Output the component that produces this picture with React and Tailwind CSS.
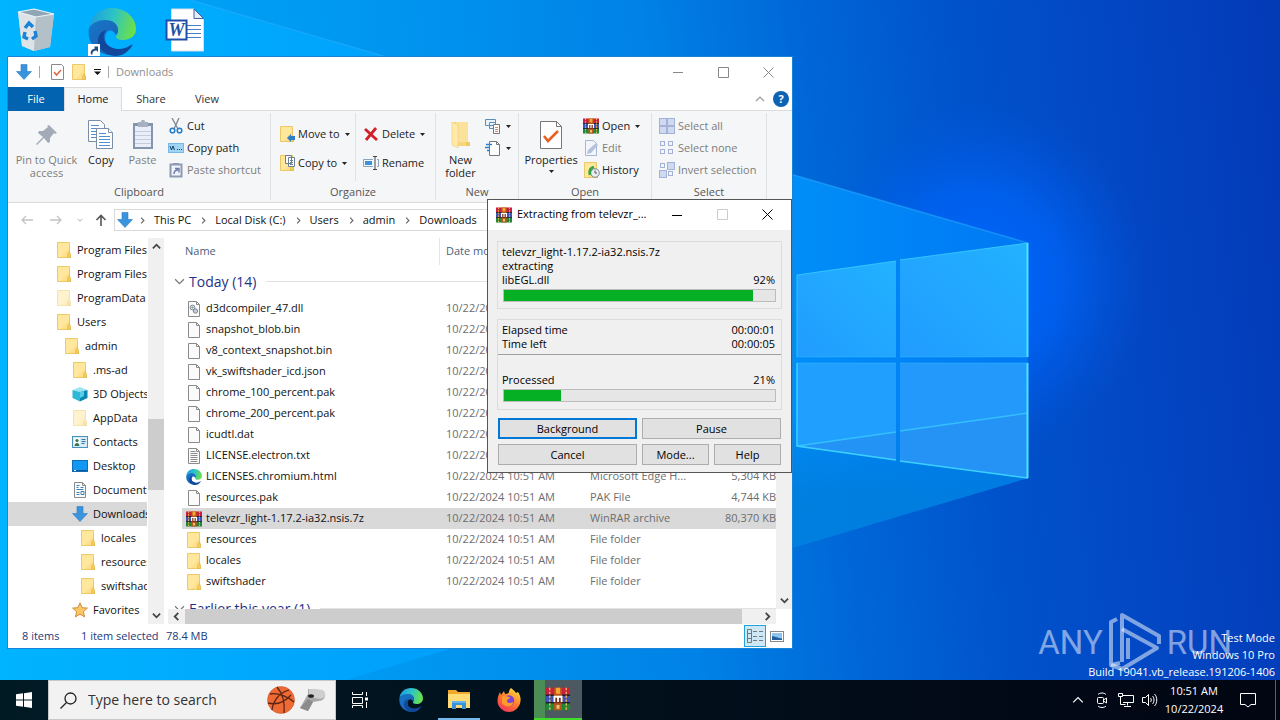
import React, { useState } from 'react';

/* ---------- Small icons ---------- */

const Folder = ({ faded = false, className = 'w-4 h-4' }) => (
    <svg className={className} viewBox="0 0 16 16" opacity={faded ? 0.5 : 1}>
        <path d="M1.5 0.5h12v11l1 1v3h-13z" fill="#ffe08a" stroke="#e8c04f" strokeWidth="0.8" />
        <path d="M2 1h11v4l-8 10H2z" fill="#ffe9a6" opacity="0.7" />
        <path d="M13.5 9.5l-2 2.5v3.5h3v-3z" fill="#f3cd5e" stroke="#dfb347" strokeWidth="0.6" />
    </svg>
);

const BigFolder = () => (
    <svg className="w-5 h-7" viewBox="0 0 20 28">
        <path d="M3 1h14v20l2 2v2H3z" fill="#f6d67c" />
        <path d="M5 1h12v20H5z" fill="#fbe29a" />
        <path d="M1 1l6 3v23l-6-3z" fill="#ffe9ab" stroke="#f0cf72" strokeWidth="0.6" />
        <path d="M15 21h4v4h-4z" fill="#f0c95f" />
    </svg>
);

const DownArrow = ({ className = 'w-4 h-4' }) => (
    <svg className={className} viewBox="0 0 16 16">
        <path d="M5 0.5h6v7h4.5L8 15.5 0.5 7.5H5z" fill="#3a93dd" stroke="#2b7cc4" strokeWidth="0.6" />
    </svg>
);

const PageIcon = ({ kind, className = 'w-4 h-4' }) => (
    <svg className={className} viewBox="0 0 16 16" fill="none">
        <path d="M2.5 0.5h8l3 3v12h-11z" fill="#fbfbfb" stroke="#8a8a8a" />
        <path d="M10.5 0.5v3h3" stroke="#8a8a8a" />
        {kind === 'text' && <path d="M4.5 3.5h5M4.5 5.5h7M4.5 7.5h7M4.5 9.5h7M4.5 11.5h7M4.5 13.5h7" stroke="#8d8d8d" />}
        {kind === 'dll' && (
            <g stroke="#7d8b96">
                <circle cx="6.5" cy="6.5" r="2.4" fill="#dce4ea" />
                <circle cx="9.5" cy="10" r="2.2" fill="#c3cfd8" />
                <circle cx="6.5" cy="6.5" r="0.6" />
            </g>
        )}
        {kind === 'doc' && (
            <g stroke="#3b82b8">
                <path d="M4.5 3.5h3M4.5 5.5h2M8.5 5.5h3M4.5 7.5h7M4.5 10.5h3M9 9.5h3v3H9zM4.5 12.5h3" />
            </g>
        )}
    </svg>
);

const RarIcon = ({ className = 'w-4 h-4' }) => (
    <svg className={className} viewBox="0 0 16 16">
        <rect x="0" y="0.5" width="16" height="5" fill="#c8203f" />
        <rect x="0" y="5.5" width="16" height="5" fill="#3f52b5" />
        <rect x="0" y="10.5" width="16" height="5" fill="#238636" />
        <path d="M0 5.5h16M0 10.5h16" stroke="#20202c" strokeWidth="0.9" />
        <path d="M2.5 0.5v15M13.5 0.5v15" stroke="#e3b04b" strokeWidth="1" strokeDasharray="1.6 1" />
        <rect x="5.4" y="0.5" width="5.2" height="15" fill="#b8561f" />
        <rect x="6.6" y="0.5" width="2.8" height="4" fill="#f7a531" />
        <path d="M5 6.2h6v4.6H5z" fill="#7c2c14" />
        <path d="M5.6 10V6.5h4.8V10M8 6.5V10" stroke="#fff" strokeWidth="1.2" fill="none" />
        <path d="M7 12h2v2.5H7z" fill="#e9c36b" />
    </svg>
);

const EdgeIcon = ({ className = 'w-4 h-4', id = 'e' }) => (
    <svg className={className} viewBox="0 0 48 48">
        <defs>
            <linearGradient id={`${id}a`} x1="0" y1="0.2" x2="1" y2="0.4">
                <stop offset="0" stopColor="#1b9ce0" />
                <stop offset="0.5" stopColor="#2cc3c8" />
                <stop offset="1" stopColor="#6be04a" />
            </linearGradient>
            <linearGradient id={`${id}b`} x1="0" y1="0" x2="0.8" y2="1">
                <stop offset="0" stopColor="#1677c8" />
                <stop offset="1" stopColor="#1b5fb5" />
            </linearGradient>
        </defs>
        <path d="M1 20C2 8 12 0 24 0c14 0 24 10 24 21 0 7-6 11-13 11-5 0-7-2-7-3 0-2 2-3 2-7 0-5-5-9-12-9C9 13 3 16 1 20z" fill={`url(#${id}a)`} />
        <path d="M1 20c3-5 9-8 16-8 8 0 13 4 13 10 0 3-1 4-2 5-2-4-6-6-9-3-5 6 0 19 11 23C15 50-2 39 1 20z" fill={`url(#${id}b)`} />
        <path d="M18 22c-6 9 1 18 12 19 6 0 10-2 13-4 1-1 2 0 1 1-4 6-9 10-17 10-11-1-18-9-17-17 1-5 4-8 8-9z" fill="#12489c" />
    </svg>
);

const ContactsIcon = () => (
    <svg className="w-4 h-4" viewBox="0 0 16 16">
        <rect x="0.5" y="2.5" width="15" height="11" fill="#d8ecf8" stroke="#4a90bd" />
        <rect x="2" y="4" width="6" height="8" fill="#fff" />
        <circle cx="5" cy="6.5" r="1.6" fill="#38764f" />
        <path d="M2.5 12c0-4 5-4 5 0z" fill="#38764f" />
        <path d="M9.5 5.5h4M9.5 7.5h4M9.5 9.5h3" stroke="#2f78aa" />
    </svg>
);

const DesktopIcon = () => (
    <svg className="w-4 h-4" viewBox="0 0 16 16">
        <rect x="0.5" y="2.5" width="15" height="11" fill="#1198f2" stroke="#0d6fb8" />
        <path d="M1 12.5h14" stroke="#0b5796" />
        <path d="M2 12.5h2" stroke="#fff" />
    </svg>
);

const CubeIcon = () => (
    <svg className="w-4 h-4" viewBox="0 0 16 16">
        <path d="M0.5 4L8 1l7.5 3L8 6z" fill="#9ce4f2" />
        <path d="M0.5 4L8 6v9.5L0.5 12z" fill="#2fb7d8" />
        <path d="M15.5 4L8 6v9.5l7.5-3.5z" fill="#0b86b4" />
        <path d="M8 6l4-1v5l-4 2z" fill="#53cdea" />
    </svg>
);

const StarIcon = () => (
    <svg className="w-4 h-4" viewBox="0 0 16 16">
        <path d="M8 0.8l2.1 4.9 5.3.4-4 3.5 1.2 5.3L8 12.1l-4.6 2.8 1.2-5.3-4-3.5 5.3-.4z" fill="#fbc765" stroke="#d08a3c" />
    </svg>
);

const Chevron = ({ dir = 'down', className = 'w-2 h-2', width = 2 }) => {
    const d = { down: 'M1 3l4 4 4-4', up: 'M1 7l4-4 4 4', left: 'M7 1L3 5l4 4', right: 'M3 1l4 4-4 4' }[dir];
    return (
        <svg className={className} viewBox="0 0 10 10" fill="none" stroke="currentColor" strokeWidth={width}>
            <path d={d} />
        </svg>
    );
};

const Caret = () => (
    <svg className="w-[5px] h-[3px] shrink-0" viewBox="0 0 5 3"><path d="M0 0h5L2.5 3z" fill="#222" /></svg>
);

const WindowControls = ({ tone, maxTone }) => (
    <div className="flex items-center">
        <button aria-label="Minimize" className={`w-[46px] h-7 grid place-items-center ${tone}`}>
            <svg className="w-[10px] h-[10px]" viewBox="0 0 10 10" stroke="currentColor"><path d="M0 5.5h10" /></svg>
        </button>
        <button aria-label="Maximize" className={`w-11 h-7 grid place-items-center ${maxTone}`}>
            <svg className="w-[11px] h-[11px]" viewBox="0 0 11 11" stroke="currentColor" fill="none"><path d="M.5.5h10v10H.5z" /></svg>
        </button>
        <button aria-label="Close" className={`w-[47px] h-7 grid place-items-center ${tone}`}>
            <svg className="w-[11px] h-[11px]" viewBox="0 0 11 11" stroke="currentColor"><path d="M.5.5l10 10M10.5.5l-10 10" /></svg>
        </button>
    </div>
);

/* ---------- Wallpaper and desktop ---------- */

const Wallpaper = () => (
    <svg className="absolute inset-0 w-full h-full" viewBox="0 0 1280 720" preserveAspectRatio="xMidYMid slice">
        <defs>
            <linearGradient id="sky" x1="0" y1="0.05" x2="1" y2="0">
                <stop offset="0" stopColor="#00aafc" />
                <stop offset="0.3" stopColor="#0096f0" />
                <stop offset="0.5" stopColor="#0082e6" />
                <stop offset="0.62" stopColor="#0068d8" />
                <stop offset="0.74" stopColor="#0053cc" />
                <stop offset="0.88" stopColor="#0345c2" />
                <stop offset="1" stopColor="#033ab6" />
            </linearGradient>
            <linearGradient id="beam" x1="0" y1="0" x2="1" y2="0">
                <stop offset="0" stopColor="#00b4ff" />
                <stop offset="0.75" stopColor="#0090f8" />
                <stop offset="1" stopColor="#0078f4" />
            </linearGradient>
            <linearGradient id="low" x1="0" y1="0" x2="0" y2="1">
                <stop offset="0.3" stopColor="#0078d8" stopOpacity="0" />
                <stop offset="0.7" stopColor="#007cda" stopOpacity="0.8" />
            </linearGradient>
            <radialGradient id="glow">
                <stop offset="0" stopColor="#0068ff" />
                <stop offset="0.5" stopColor="#0064f8" stopOpacity="0.7" />
                <stop offset="1" stopColor="#0058e0" stopOpacity="0" />
            </radialGradient>
            <linearGradient id="pane" x1="0" y1="1" x2="1" y2="0">
                <stop offset="0" stopColor="#219cff" />
                <stop offset="1" stopColor="#22b2ff" />
            </linearGradient>
        </defs>
        <rect width="1280" height="720" fill="url(#sky)" />
        <ellipse cx="980" cy="280" rx="170" ry="180" fill="url(#glow)" />
        <path d="M0 0H190L1028 243V478L210 720H0z" fill="url(#beam)" />
        <path d="M792 360H1028V478L792 548z" fill="url(#low)" />
        <path d="M190 0L1028 243" stroke="#2fb0ff" strokeWidth="1.5" opacity="0.45" />
        <path d="M797 275L896 261V357H797z" fill="url(#pane)" />
        <path d="M900 260L1028 243V357H900z" fill="url(#pane)" />
        <path d="M797 363H896V460L797 446z" fill="#219fff" />
        <path d="M900 363H1028V478L900 461z" fill="#2399fb" />
        <path d="M797 446L896 432V460zM900 431L1028 413V478L900 461z" fill="#2590f2" opacity="0.7" />
        <g fill="none" stroke="#3cd0ff">
            <path d="M797 446L896 432M900 431L1028 413" strokeWidth="1.5" opacity="0.7" />
            <path d="M896 261L797 275V357M900 260L1028 243" opacity="0.8" />
            <path d="M797 363V446L896 460M900 461L1028 478" strokeWidth="1.5" />
            <path d="M1027.5 243V357M1027.5 363V478" stroke="#48e6ff" strokeWidth="2" />
            <path d="M797 357H896M900 357H1028M797 363H896M900 363H1028" opacity="0.35" />
        </g>
    </svg>
);

const RecycleBin = () => (
    <svg className="w-10 h-11" viewBox="0 0 40 44">
        <path d="M2 4l18-2 18 4-4 33-16 4L6 38z" fill="#c9d3da" />
        <path d="M2 4l18 5-2 34L6 38z" fill="#dde3e7" />
        <path d="M20 9l18-3-4 33-16 4z" fill="#b4c0c8" />
        <path d="M2 4l16-3 20 5-18 3z" fill="#8fa6b5" stroke="#eef3f6" strokeWidth="1.2" />
        <g fill="none" stroke="#1b83d6" strokeWidth="3.4">
            <path d="M9 20l4-5 4 4M19 23l1 5-4 3M12 31l-4-2 1-5" />
        </g>
    </svg>
);

const WordFile = () => (
    <svg className="w-10 h-11" viewBox="0 0 40 44">
        <path d="M6.5 1H29l9.500 9.500V43H6.500z" fill="#fff" stroke="#d7dde8" />
        <path d="M29 1v9.500h9.500z" fill="#e7edf7" stroke="#41639f" />
        <path d="M22 17.500h14M22 21.500h14M22 25.500h14M22 29.500h14" stroke="#4b7dc4" />
        <rect x="1.500" y="12.500" width="20" height="19" fill="#fff" stroke="#1d4fa8" strokeWidth="2" />
        <text x="11.500" y="28" textAnchor="middle" fontFamily="Liberation Serif, serif" fontSize="18" fontWeight="bold" fontStyle="italic" fill="#1d4fa8">W</text>
    </svg>
);

const DesktopShortcuts = () => (
    <div className="relative flex items-start gap-7 pl-4 pt-2">
        <button aria-label="Recycle Bin" className="w-11"><RecycleBin /></button>
        <button aria-label="Microsoft Edge" className="relative w-[49px]">
            <EdgeIcon className="w-12 h-12" id="desk" />
            <span className="absolute left-0 bottom-0 w-3 h-3 bg-white grid place-items-center">
                <svg className="w-[10px] h-[10px]" viewBox="0 0 10 10"><path d="M2 9.500C1 6 3 4 5.500 4V1.500h3.500V7L7.500 5.500C5 5.500 3 7 3.500 9.500z" fill="#1c4c8c" /></svg>
            </span>
        </button>
        <button aria-label="Word document" className="w-10"><WordFile /></button>
    </div>
);

const Watermark = () => (
    <div className="absolute right-[5px] bottom-0 text-white">
        <div className="absolute right-[43px] bottom-2 flex items-center text-white/50 font-['Roboto'] text-[33px] leading-none">
            <span>ANY</span>
            <svg className="w-14 h-[60px] mx-1" viewBox="0 0 56 60" fill="none" stroke="currentColor" strokeWidth="4" strokeLinejoin="round">
                <path d="M10 7L4 10v43l9-2M15 50V3l37 21v8" />
                <path d="M15 17l35 19L15 57 4 53" />
                <path d="M21 47V26" />
            </svg>
            <span>RUN</span>
        </div>
        <div className="relative text-right text-[11px] leading-[17px]">
            <p>Test Mode</p>
            <p>Windows 10 Pro</p>
            <p>Build 19041.vb_release.191206-1406</p>
        </div>
    </div>
);

/* ---------- Explorer window ---------- */

const SmallButton = ({ icon, label, muted, caret }) => (
    <button className={`flex items-center h-[22px] gap-[3px] whitespace-nowrap ${muted ? 'text-[#7d7d7d]' : 'text-[#222]'}`}>
        <span className="w-4 h-4 grid place-items-center shrink-0">{icon}</span>
        {label}
        {caret && <span className="pl-[2px]"><Caret /></span>}
    </button>
);

const BigButton = ({ icon, lines, muted, caret, className }) => (
    <button className={`flex flex-col items-center pt-[6px] leading-[13px] ${className} ${muted ? 'text-[#7d7d7d]' : 'text-[#222]'}`}>
        <span className="h-8 mb-[2px] grid place-items-center">{icon}</span>
        {lines.map((line) => <span key={line} className="whitespace-nowrap">{line}</span>)}
        {caret && <span className="pt-1"><Caret /></span>}
    </button>
);

const RibbonGroup = ({ title, className, children }) => (
    <section className={`flex flex-col border-r border-[#e0e1e3] my-[2px] ${className}`}>
        <div className="flex h-[73px] items-start">{children}</div>
        <h2 className="text-center text-[#555] leading-4">{title}</h2>
    </section>
);

const PinIcon = () => (
    <svg className="w-6 h-6" viewBox="0 0 24 24" fill="#a3abb8">
        <path d="M14 2l8 8-2 1-1-1-4 5 0 4-2 1-4-5-7 7-1-1 7-7-5-4 1-2h4l5-4-1-1z" />
    </svg>
);

const CopyIcon = () => (
    <svg className="w-[26px] h-[30px]" viewBox="0 0 26 30" fill="#fff" stroke="#7c8da5">
        <path d="M.5.5h12l4 4v17H.5z" />
        <path d="M3 5.500h8M3 8.500h10M3 11.500h6M3 14.500h5M3 17.500h5" stroke="#4f8fd6" />
        <path d="M8.500 8.500h12l4 4v16h-16z" />
        <path d="M20.500 8.500v4h4" />
        <path d="M11 13.500h7M11 16.500h11M11 19.500h11M11 22.500h11M11 25.500h11" stroke="#4f8fd6" />
    </svg>
);

const PasteIcon = () => (
    <svg className="w-[22px] h-[30px]" viewBox="0 0 22 30">
        <rect x="1" y="3" width="20" height="26" fill="#8695ae" />
        <rect x="3" y="6" width="16" height="21" fill="#e9eef8" />
        <path d="M3 11.500h16M3 15.500h16M3 19.500h16M3 23.500h16" stroke="#c3cde2" />
        <path d="M6 2h3c0-3 4-3 4 0h3v5H6z" fill="#a7b1c2" />
    </svg>
);

const CutIcon = () => (
    <svg className="w-4 h-4" viewBox="0 0 16 16" fill="none">
        <path d="M4 0l6 11M11 0L6 11" stroke="#7b8794" strokeWidth="1.3" />
        <circle cx="4.500" cy="12.500" r="2.300" stroke="#2a80c8" strokeWidth="1.600" />
        <circle cx="11.500" cy="12.500" r="2.300" stroke="#2a80c8" strokeWidth="1.600" />
    </svg>
);

const CopyPathIcon = () => (
    <svg className="w-4 h-4" viewBox="0 0 16 16" fill="none">
        <rect x=".5" y="3.500" width="15" height="9" fill="#9fd4f5" stroke="#7ab8df" />
        <path d="M2 6l1.500 4L5 6l1.500 4M9 9.500h1M11 9.500h1M13 9.500h1" stroke="#17466e" />
    </svg>
);

const PasteShortcutIcon = () => (
    <svg className="w-4 h-4" viewBox="0 0 16 16" fill="none">
        <path d="M2.500 2.500h11v12h-11z" fill="#eef2fa" stroke="#8e9ab4" strokeWidth="2" />
        <path d="M5 1h6v2H5z" fill="#8e9ab4" />
        <path d="M6 12c0-3 1-4 4-4M7 6.500h4v4" stroke="#6b7ba0" strokeWidth="1.400" />
    </svg>
);

const MoveIcon = () => (
    <span className="relative">
        <Folder />
        <svg className="absolute right-0 bottom-0 w-2 h-2" viewBox="0 0 8 8"><path d="M4 0v2h4v4H4v2L0 4z" fill="#2e7fc9" /></svg>
    </span>
);

const CopyToIcon = () => (
    <span className="relative">
        <Folder />
        <svg className="absolute right-0 top-0 w-[10px] h-3" viewBox="0 0 10 12" fill="#fff" stroke="#6c7f99">
            <path d="M.5.5h6v8h-6zM3.500 2.500h6v9h-6zM5 5.500h3M5 7.500h3M5 9.500h3" />
        </svg>
    </span>
);

const DeleteIcon = () => (
    <svg className="w-4 h-4" viewBox="0 0 16 16"><path d="M2 3l12 11M13 2L3 14" stroke="#d1202c" strokeWidth="2.800" /></svg>
);

const RenameIcon = () => (
    <svg className="w-4 h-4" viewBox="0 0 16 16" fill="none">
        <path d="M10 4.500H.5v7H10M14 4.500h1.500v7H14" stroke="#8aa2ba" />
        <path d="M2 6h7v4H2z" fill="#3a92da" />
        <path d="M10 1.500h4M12 1.500v13M10 14.500h4" stroke="#444" />
    </svg>
);

const NewItemIcon = () => (
    <svg className="w-4 h-4" viewBox="0 0 16 16" fill="#e9f3fb" stroke="#5c8db8">
        <path d="M.5 1.500h10v6H.5zM4.500 4.500h6v6h-6z" />
        <path d="M8.500 6.500h6v9h-6z" fill="#fff" stroke="#777" />
        <path d="M10 9.500h3M10 11.500h3M10 13.500h3" stroke="#e07f6a" />
    </svg>
);

const EasyAccessIcon = () => (
    <svg className="w-4 h-4" viewBox="0 0 16 16" fill="none">
        <path d="M4.500 1.500h7l3 3v11h-10z" fill="#fff" stroke="#777" />
        <path d="M11.500 1.500v3h3" stroke="#777" />
        <path d="M1 4.500h6M0 7.500h5M2 10.500h3" stroke="#2e7fc9" strokeWidth="1.400" />
    </svg>
);

const PropertiesIcon = () => (
    <svg className="w-[22px] h-[28px]" viewBox="0 0 22 28" fill="none">
        <path d="M.5.5h16l5 5v22H.5z" fill="#fff" stroke="#777" />
        <path d="M16.500.5v5h5" stroke="#777" />
        <path d="M4 15l4 5 10-10" stroke="#e8601c" strokeWidth="2.600" />
    </svg>
);

const EditIcon = () => (
    <svg className="w-4 h-4" viewBox="0 0 16 16" fill="none">
        <path d="M2.500.5h8l3 3v12h-11z" fill="#f2f5fb" stroke="#a9b6d2" />
        <path d="M4 14l1-4 8-7 2 2-7 8z" fill="#b4c2de" />
    </svg>
);

const HistoryIcon = () => (
    <span className="relative">
        <Folder />
        <svg className="absolute -right-px bottom-0 w-3 h-3" viewBox="0 0 12 12" fill="none">
            <circle cx="7" cy="7" r="4.300" fill="#e5ecf2" stroke="#7c8a94" />
            <path d="M7 4.500V7h2" stroke="#555" />
            <path d="M6 1C2 2 1 5 2 9" stroke="#35a544" strokeWidth="2.600" />
        </svg>
    </span>
);

const SelectIcon = ({ kind }) => {
    const cells = [[0, 0], [8, 0], [0, 8], [8, 8]];
    return (
        <svg className="w-4 h-4" viewBox="0 0 16 16" stroke="#a3b2d6">
            {cells.map(([x, y], i) => {
                const solid = kind === 'all' || (kind === 'invert' && (i === 1 || i === 2));
                return solid
                    ? <rect key={i} x={x + 0.5} y={y + 0.5} width="7" height="7" fill="#cfdaf1" />
                    : <rect key={i} x={x + 1.5} y={y + 1.5} width="4" height="4" fill="#f2f5fc" />;
            })}
        </svg>
    );
};

const Ribbon = () => (
    <div className="flex h-[93px] bg-[#f5f6f7] border-y border-[#dadbdc]">
        <RibbonGroup title="Clipboard" className="w-[263px]">
            <BigButton muted className="w-[77px]" icon={<PinIcon />} lines={['Pin to Quick', 'access']} />
            <BigButton className="w-8" icon={<CopyIcon />} lines={['Copy']} />
            <BigButton muted className="w-[51px]" icon={<PasteIcon />} lines={['Paste']} />
            <div className="pt-[2px]">
                <SmallButton icon={<CutIcon />} label="Cut" />
                <SmallButton icon={<CopyPathIcon />} label="Copy path" />
                <SmallButton muted icon={<PasteShortcutIcon />} label="Paste shortcut" />
            </div>
        </RibbonGroup>
        <RibbonGroup title="Organize" className="w-[165px]">
            <div className="flex flex-col gap-[7px] pl-2 pt-[10px] w-[85px] h-[68px] border-r border-[#e0e1e3]">
                <SmallButton caret icon={<MoveIcon />} label="Move to" />
                <SmallButton caret icon={<CopyToIcon />} label="Copy to" />
            </div>
            <div className="flex flex-col gap-[7px] pl-[7px] pt-[10px]">
                <SmallButton caret icon={<DeleteIcon />} label="Delete" />
                <SmallButton icon={<RenameIcon />} label="Rename" />
            </div>
        </RibbonGroup>
        <RibbonGroup title="New" className="w-[83px]">
            <BigButton className="w-[49px]" icon={<BigFolder />} lines={['New', 'folder']} />
            <div className="pt-[2px]">
                <SmallButton caret icon={<NewItemIcon />} />
                <SmallButton caret icon={<EasyAccessIcon />} />
            </div>
        </RibbonGroup>
        <RibbonGroup title="Open" className="w-[133px]">
            <BigButton caret className="w-[64px]" icon={<PropertiesIcon />} lines={['Properties']} />
            <div className="pt-[2px]">
                <SmallButton caret icon={<RarIcon />} label="Open" />
                <SmallButton muted icon={<EditIcon />} label="Edit" />
                <SmallButton icon={<HistoryIcon />} label="History" />
            </div>
        </RibbonGroup>
        <RibbonGroup title="Select" className="w-[115px]">
            <div className="pt-[2px] pl-[7px]">
                <SmallButton muted icon={<SelectIcon kind="all" />} label="Select all" />
                <SmallButton muted icon={<SelectIcon kind="none" />} label="Select none" />
                <SmallButton muted icon={<SelectIcon kind="invert" />} label="Invert selection" />
            </div>
        </RibbonGroup>
    </div>
);

const TitleBar = () => (
    <div className="flex items-center h-[30px] pl-2">
        <DownArrow />
        <span className="w-px h-3 ml-[7px] mr-2 bg-[#aaa]" />
        <svg className="w-4 h-4 ml-px" viewBox="0 0 16 16" fill="none">
            <path d="M2.500.5h10l2 2v13h-12z" fill="#fff" stroke="#8a8a8a" />
            <path d="M5 8l2.500 3L12 6" stroke="#e0674a" strokeWidth="1.600" />
        </svg>
        <Folder className="w-4 h-4 ml-[6px]" />
        <svg className="w-[7px] h-[6px] ml-[7px]" viewBox="0 0 7 6"><path d="M0 0h7v1H0zM0 2.500h7L3.500 6z" fill="#111" /></svg>
        <span className="w-px h-3 mx-[7px] bg-[#aaa]" />
        <h1 className="flex-1 text-[#8f8f8f]">Downloads</h1>
        <WindowControls tone="text-[#888]" maxTone="text-[#888]" />
    </div>
);

const TabBar = () => (
    <div className="flex items-stretch h-6 relative z-10 -mb-px">
        <button className="w-14 bg-[#0263b1] text-white">File</button>
        <button className="w-[58px] bg-[#f5f6f7] border border-b-0 border-[#dadbdc] text-[#222]">Home</button>
        <button className="w-[58px] text-[#333]">Share</button>
        <button className="w-[54px] text-[#333]">View</button>
        <div className="flex-1" />
        <button aria-label="Collapse ribbon" className="text-[#999] px-2"><Chevron dir="up" className="w-[10px] h-[10px]" width={1.2} /></button>
        <button aria-label="Help" className="self-center mr-[3px] w-4 h-4 rounded-full bg-[#0d62b4] text-white font-bold text-[11px] leading-4">?</button>
    </div>
);

const crumbs = ['This PC', 'Local Disk (C:)', 'Users', 'admin', 'Downloads'];

const AddressBar = () => (
    <nav className="flex items-center h-[34px] pl-3">
        <button aria-label="Back" className="w-[14px] text-[#c4c4c4]">
            <svg className="w-[14px] h-[10px]" viewBox="0 0 14 10" fill="none" stroke="currentColor" strokeWidth="1.300"><path d="M13 5H2M6 1L2 5l4 4" /></svg>
        </button>
        <button aria-label="Forward" className="w-[14px] ml-[15px] text-[#c4c4c4]">
            <svg className="w-[14px] h-[10px]" viewBox="0 0 14 10" fill="none" stroke="currentColor" strokeWidth="1.300"><path d="M1 5h11M8 1l4 4-4 4" /></svg>
        </button>
        <button aria-label="Recent locations" className="ml-[14px] text-[#ccc]"><Chevron className="w-[6px] h-[6px]" /></button>
        <button aria-label="Up" className="ml-3 text-[#555]">
            <svg className="w-3 h-3" viewBox="0 0 12 12" fill="none" stroke="currentColor" strokeWidth="1.600"><path d="M6 12V1.500M1.500 6L6 1.500 10.500 6" /></svg>
        </button>
        <div className="flex flex-1 items-center h-[22px] ml-[7px] mr-3 pl-[2px] border border-[#d9d9d9] text-[#111]">
            <DownArrow className="w-4 h-4 -mr-[3px]" />
            {crumbs.map((crumb) => (
                <React.Fragment key={crumb}>
                    <span className="ml-[9px] mr-2 text-[#666]"><Chevron dir="right" className="w-[7px] h-[7px]" width={1.6} /></span>
                    <a href="#" className="whitespace-nowrap">{crumb}</a>
                </React.Fragment>
            ))}
        </div>
    </nav>
);

const tree = [
    { name: 'Program Files', icon: <Folder />, pad: 'pl-12' },
    { name: 'Program Files (x86)', icon: <Folder />, pad: 'pl-12' },
    { name: 'ProgramData', icon: <Folder faded />, pad: 'pl-12' },
    { name: 'Users', icon: <Folder />, pad: 'pl-12' },
    { name: 'admin', icon: <Folder />, pad: 'pl-14' },
    { name: '.ms-ad', icon: <Folder />, pad: 'pl-16' },
    { name: '3D Objects', icon: <CubeIcon />, pad: 'pl-16' },
    { name: 'AppData', icon: <Folder faded />, pad: 'pl-16' },
    { name: 'Contacts', icon: <ContactsIcon />, pad: 'pl-16' },
    { name: 'Desktop', icon: <DesktopIcon />, pad: 'pl-16' },
    { name: 'Documents', icon: <PageIcon kind="doc" />, pad: 'pl-16' },
    { name: 'Downloads', icon: <DownArrow />, pad: 'pl-16' },
    { name: 'locales', icon: <Folder />, pad: 'pl-[72px]' },
    { name: 'resources', icon: <Folder />, pad: 'pl-[72px]' },
    { name: 'swiftshader', icon: <Folder />, pad: 'pl-[72px]' },
    { name: 'Favorites', icon: <StarIcon />, pad: 'pl-16' },
];

const NavTree = () => (
    <div className="flex w-[156px] shrink-0">
        <ul className="flex-1 overflow-hidden text-[#111]">
            {tree.map((item, i) => (
                <li key={i} className={`flex items-center h-6 gap-[5px] whitespace-nowrap ${item.pad} ${item.name === 'Downloads' ? 'bg-[#d9d9d9]' : ''}`}>
                    <span className="shrink-0">{item.icon}</span>
                    {item.name}
                </li>
            ))}
        </ul>
        <div className="flex flex-col items-center w-4 ml-px bg-[#f0f0f0] text-[#444]">
            <span className="h-[17px] pt-1"><Chevron dir="up" className="w-[9px] h-[9px]" /></span>
            <span className="grow-[164]" />
            <span className="w-full grow-[72] bg-[#cdcdcd]" />
            <span className="grow-[117]" />
            <span className="h-[17px] pt-1"><Chevron className="w-[9px] h-[9px]" /></span>
        </div>
    </div>
);

const files = [
    { name: 'd3dcompiler_47.dll', icon: <PageIcon kind="dll" />, type: 'Application exten...', size: '4,777 KB' },
    { name: 'snapshot_blob.bin', icon: <PageIcon />, type: 'BIN File', size: '262 KB' },
    { name: 'v8_context_snapshot.bin', icon: <PageIcon />, type: 'BIN File', size: '627 KB' },
    { name: 'vk_swiftshader_icd.json', icon: <PageIcon />, type: 'JSON File', size: '1 KB' },
    { name: 'chrome_100_percent.pak', icon: <PageIcon />, type: 'PAK File', size: '127 KB' },
    { name: 'chrome_200_percent.pak', icon: <PageIcon />, type: 'PAK File', size: '176 KB' },
    { name: 'icudtl.dat', icon: <PageIcon />, type: 'DAT File', size: '10,221 KB' },
    { name: 'LICENSE.electron.txt', icon: <PageIcon kind="text" />, type: 'Text Document', size: '2 KB' },
    { name: 'LICENSES.chromium.html', icon: <EdgeIcon id="file" />, type: 'Microsoft Edge H...', size: '5,304 KB' },
    { name: 'resources.pak', icon: <PageIcon />, type: 'PAK File', size: '4,744 KB' },
    { name: 'televzr_light-1.17.2-ia32.nsis.7z', icon: <RarIcon />, type: 'WinRAR archive', size: '80,370 KB' },
    { name: 'resources', icon: <Folder />, type: 'File folder', size: '' },
    { name: 'locales', icon: <Folder />, type: 'File folder', size: '' },
    { name: 'swiftshader', icon: <Folder />, type: 'File folder', size: '' },
];

const GroupRow = ({ children }) => (
    <tr className="h-[33px]">
        <th colSpan={4} scope="rowgroup" className="p-0 font-normal">
            <div className="flex items-center pl-[6px] text-sm text-[#1e3287] whitespace-nowrap">
                <span className="text-[#777] mr-1"><Chevron className="w-[11px] h-[11px]" width={1.1} /></span>
                {children}
                <span className="flex-1 h-px ml-[10px] bg-[#e2e2e2]" />
            </div>
        </th>
    </tr>
);

const FileList = () => {
    const [selected, setSelected] = useState('televzr_light-1.17.2-ia32.nsis.7z');

    return (
        <div className="flex flex-col flex-1 min-w-0 ml-1">
            <div className="flex flex-1 min-h-0">
                <div className="flex-1 overflow-hidden">
                    <table className="w-full table-fixed border-separate border-spacing-0 text-left">
                        <colgroup>
                            <col className="w-[272px]" />
                            <col className="w-36" />
                            <col className="w-[106px]" />
                            <col />
                        </colgroup>
                        <thead>
                            <tr className="h-[27px] text-[#4c607a]">
                                <th className="p-0 pl-[17px] font-normal border-r border-[#e5e5e5]">Name</th>
                                <th className="p-0 pl-[6px] font-normal border-r border-[#e5e5e5]">Date modified</th>
                                <th className="p-0 pl-[6px] font-normal border-r border-[#e5e5e5]">Type</th>
                                <th className="p-0 pl-[6px] font-normal">Size</th>
                            </tr>
                        </thead>
                        <tbody>
                            <GroupRow>Today (14)</GroupRow>
                            {files.map((file) => {
                                const bg = file.name === selected ? 'bg-[#d9d9d9]' : '';
                                return (
                                    <tr key={file.name} className="h-[21px] text-[#6d6d6d] whitespace-nowrap" onClick={() => setSelected(file.name)}>
                                        <td className="p-0 pl-[14px]">
                                            <div className={`flex items-center h-[21px] pl-1 gap-1 text-[#111] ${bg}`}>{file.icon}{file.name}</div>
                                        </td>
                                        <td className={`p-0 pl-[6px] ${bg}`}>10/22/2024 10:51 AM</td>
                                        <td className={`p-0 pl-[6px] ${bg}`}>{file.type}</td>
                                        <td className={`p-0 text-right ${bg}`}>{file.size}</td>
                                    </tr>
                                );
                            })}
                            <GroupRow>Earlier this year (1)</GroupRow>
                        </tbody>
                    </table>
                </div>
                <div className="flex flex-col items-center justify-end w-4 bg-[#f0f0f0] text-[#444]">
                    <span className="h-[17px] pt-1"><Chevron className="w-[9px] h-[9px]" /></span>
                </div>
            </div>
            <div className="flex items-center h-[15px] mr-4 bg-[#f0f0f0] text-[#444]">
                <span className="w-[17px] grid place-items-center"><Chevron dir="left" className="w-[9px] h-[9px]" /></span>
                <span className="h-full grow-[556] bg-[#cdcdcd]" />
                <span className="grow-[17]" />
                <span className="w-[17px] grid place-items-center"><Chevron dir="right" className="w-[9px] h-[9px]" /></span>
            </div>
        </div>
    );
};

const StatusBar = () => (
    <footer className="flex items-center h-6 pl-[14px] pr-1 text-[#24397c]">
        <span className="w-[59px]">8 items</span>
        <span className="w-[85px] whitespace-nowrap">1 item selected</span>
        <span className="flex-1">78.4 MB</span>
        <button aria-label="Details view" className="w-[22px] h-[22px] grid place-items-center bg-[#cce8f6] border border-[#26a0da]">
            <svg className="w-4 h-[14px]" viewBox="0 0 16 14" fill="none" stroke="#777">
                <path d="M.5.5h4v13h-4zM.5 4.500h4M.5 9.500h4M6 2.500h4M6 7.500h4M6 11.500h4M12 2.500h4M12 7.500h4M12 11.500h4" />
            </svg>
        </button>
        <button aria-label="Thumbnail view" className="w-[22px] h-[22px] grid place-items-center">
            <svg className="w-[14px] h-[11px]" viewBox="0 0 14 11">
                <rect x=".5" y=".5" width="13" height="10" fill="#fff" stroke="#888" />
                <path d="M2 2h10v7H2z" fill="#8cc4ee" />
                <path d="M2 9V5l4 1 3 1 3 .5V9z" fill="#1f5f9c" />
            </svg>
        </button>
    </footer>
);

const ExplorerWindow = () => (
    <main className="absolute left-[7px] top-14 w-[786px] h-[593px] flex flex-col bg-white border border-[#1883d7]">
        <TitleBar />
        <TabBar />
        <Ribbon />
        <AddressBar />
        <div className="flex flex-1 min-h-0 pt-px">
            <NavTree />
            <FileList />
        </div>
        <StatusBar />
    </main>
);

/* ---------- WinRAR dialog ---------- */

const ProgressBar = ({ value, label }) => (
    <div role="progressbar" aria-label={label} aria-valuenow={value} className="h-[13px] mt-[2px] mx-px border border-[#bcbcbc] bg-[#e6e6e6]">
        <div className="h-full bg-[#06b025]" style={{ width: `${value}%` }} />
    </div>
);

const Line = ({ left, right }) => (
    <p className="flex justify-between pr-[2px] whitespace-nowrap"><span>{left}</span><span>{right}</span></p>
);

const DialogButton = ({ children, primary, className = '' }) => (
    <button className={`h-[21px] bg-[#e1e1e1] ${primary ? 'border-2 border-[#0078d7]' : 'border border-[#adadad]'} ${className}`}>{children}</button>
);

const ExtractDialog = () => (
    <section role="dialog" aria-label="Extracting" className="absolute left-[487px] top-[199px] w-[305px] h-[274px] flex flex-col bg-[#f0f0f0] border border-[#555] text-black">
        <header className="flex items-center h-[30px] pl-2 pb-px bg-white">
            <RarIcon />
            <h2 className="flex-1 pl-[5px] text-[11px] whitespace-nowrap">Extracting from televzr_...</h2>
            <WindowControls tone="text-black" maxTone="text-[#ccc]" />
        </header>
        <div className="flex flex-col px-[9px] pt-[11px] text-[11px] leading-[14px]">
            <div className="h-[68px] px-1 pt-[3px] border border-[#dcdcdc]">
                <Line left="televzr_light-1.17.2-ia32.nsis.7z" />
                <Line left="extracting" />
                <Line left="libEGL.dll" right="92%" />
                <ProgressBar value={92} label="File progress" />
            </div>
            <div className="h-[91px] mt-[10px] px-1 pt-[3px] border border-[#dcdcdc]">
                <Line left="Elapsed time" right="00:00:01" />
                <Line left="Time left" right="00:00:05" />
                <div className="-mx-1 mt-[3px] mb-[18px] border-t border-[#a0a0a0]" />
                <Line left="Processed" right="21%" />
                <ProgressBar value={21} label="Total progress" />
            </div>
            <div className="grid grid-cols-4 gap-[5px] mt-2 px-px">
                <DialogButton primary className="col-span-2">Background</DialogButton>
                <DialogButton className="col-span-2">Pause</DialogButton>
                <DialogButton className="col-span-2">Cancel</DialogButton>
                <DialogButton>Mode...</DialogButton>
                <DialogButton>Help</DialogButton>
            </div>
        </div>
    </section>
);

/* ---------- Taskbar ---------- */

const Basketball = () => (
    <svg className="w-7 h-7" viewBox="0 0 28 28" fill="none" stroke="#5c2413" strokeWidth="1.300">
        <circle cx="14" cy="14" r="13.500" fill="#ee6a34" stroke="#c94b22" strokeWidth="0.500" />
        <path d="M3 8c8-2 18 3 24 8M10 1c6 7 8 16 7 26M1 17c8 2 16 0 23-8M5 24c1-9 7-17 17-20" />
    </svg>
);

const Whistle = () => (
    <svg className="w-7 h-7" viewBox="0 0 28 28">
        <path d="M9 3l14 1c5 2 4 11-3 11l-6 1-5 9-8-3 8-14z" fill="#a8a8a8" />
        <path d="M10 3l13 1c4 2 4 6 1 8-4 2-9-1-14-1z" fill="#cfcfcf" />
        <path d="M1 22l8 3 5-9-5-3z" fill="#8c8c8c" />
        <ellipse cx="12" cy="10" rx="3" ry="1.800" fill="#222" />
    </svg>
);

const FirefoxIcon = () => (
    <svg className="w-6 h-6" viewBox="0 0 24 24">
        <defs>
            <linearGradient id="ff" x1="0.8" y1="0" x2="0.2" y2="1">
                <stop offset="0" stopColor="#ffe13a" />
                <stop offset="0.5" stopColor="#ff7a2b" />
                <stop offset="1" stopColor="#f0325f" />
            </linearGradient>
        </defs>
        <path d="M14 0c2 2 4 3 5 5l2-1c2 3 3 6 2.500 9C23 19 18 24 12 24S.5 19 .5 13C.5 9 2 6 3 4l1 3 3-4 1 3c2 0 4-1 4-2 0-2 1-3 2-4z" fill="url(#ff)" />
        <circle cx="12" cy="12.500" r="5.200" fill="#7a45d6" />
        <path d="M5 9c3-2 5 0 8 0 0 2-3 2-3 4s3 3 6 1c0 5-8 6-11 1z" fill="#ff9b2e" />
    </svg>
);

const ExplorerIcon = () => (
    <svg className="w-6 h-6" viewBox="0 0 24 24">
        <path d="M1 3h8l2 2h12v16H1z" fill="#f0a92f" />
        <path d="M1 7h22v14H1z" fill="#ffdd74" />
        <path d="M5 22v-8h14v8h-4v-4H9v4z" fill="#3a93d8" />
        <path d="M5 14h14v2H5z" fill="#63b5ef" />
    </svg>
);

const Taskbar = () => (
    <footer className="relative flex h-10 shrink-0 bg-linear-to-r from-[#001a24] to-[#020613] text-white">
        <button aria-label="Start" className="w-12 grid place-items-center">
            <svg className="w-4 h-4" viewBox="0 0 16 16" fill="#fff"><path d="M0 2.300L7 1.300V7.500H0zM8 1.200L16 0v7.500H8zM0 8.500h7v6.200L0 13.700zM8 8.500h8V16l-8-1.200z" /></svg>
        </button>
        <label className="flex items-center w-72 pl-[11px] pr-2 bg-[#f2f2f2] border border-[#c8c8c8] text-[#333]">
            <svg className="w-[17px] h-[17px] shrink-0" viewBox="0 0 17 17" fill="none" stroke="#222" strokeWidth="1.300"><circle cx="10.500" cy="6.500" r="5.500" /><path d="M6.500 10.500L.5 16.500" /></svg>
            <input type="text" aria-label="Search" placeholder="Type here to search" className="flex-1 min-w-0 ml-[11px] text-sm outline-none placeholder:text-[#333]" />
            <Basketball />
            <span className="ml-1"><Whistle /></span>
        </label>
        <button aria-label="Task view" className="w-12 grid place-items-center">
            <svg className="w-4 h-4" viewBox="0 0 16 16" fill="none" stroke="#fff"><path d="M.5 0v2.500h10V0M.5 5.500h10v6H.5zM.5 16v-2.500h10V16M14.500 0v4M14.500 10v6" /><path d="M13 5.500h3v3h-3z" fill="#fff" stroke="none" /></svg>
        </button>
        <button aria-label="Microsoft Edge" className="w-[54px] grid place-items-center"><EdgeIcon className="w-6 h-6" id="task" /></button>
        <button aria-label="File Explorer" className="w-[42px] mr-1 grid place-items-center border-b-2 border-[#76b9ed]"><ExplorerIcon /></button>
        <button aria-label="Firefox" className="w-[50px] grid place-items-center"><FirefoxIcon /></button>
        <button aria-label="WinRAR" className="w-12 grid place-items-center border-b-2 border-[#3fdc2a] bg-linear-to-r from-[#4c8d55] from-22% to-[#4d5961] to-22%"><RarIcon className="w-6 h-6" /></button>
        <div className="flex-1" />
        <div className="flex items-center">
            <button aria-label="Show hidden icons" className="w-6 grid place-items-center"><Chevron dir="up" className="w-3 h-3" width={1} /></button>
            <button aria-label="Meet now" className="w-6 grid place-items-center">
                <svg className="w-4 h-4" viewBox="0 0 16 16" fill="none" stroke="#fff"><rect x="3.500" y="5.500" width="6" height="6" rx="1" /><path d="M9.500 8l3-2v5l-3-2M4 2.500c2-2 6-2 8 0M4 14c2 2 6 2 8 0" /></svg>
            </button>
            <button aria-label="Network" className="w-6 grid place-items-center">
                <svg className="w-4 h-4" viewBox="0 0 16 16" fill="none" stroke="#fff"><path d="M4.500 3.500h11v7H5M.5 1.500h4v3h-4zM2.500 4.500v8h5M9.500 10.500v3M6 14.500h7" /></svg>
            </button>
            <button aria-label="Volume" className="w-6 grid place-items-center">
                <svg className="w-4 h-4" viewBox="0 0 16 16" fill="none" stroke="#fff"><path d="M.5 5.500h3l3-3v11l-3-3h-3zM8.500 6c1 1 1 3 0 4M10.500 4c2 2 2 6 0 8M12.500 2c3 3 3 9 0 12" /></svg>
            </button>
            <time className="w-16 text-center text-[11px] leading-[18px] whitespace-nowrap">10:51 AM<br />10/22/2024</time>
            <button aria-label="Notifications" className="w-11 grid place-items-center">
                <svg className="w-4 h-4" viewBox="0 0 16 16" fill="none" stroke="#fff"><path d="M.5 1.500h15v11H11L8 15l-3-2.500H.5z" /></svg>
            </button>
            <span className="w-[5px] h-10 ml-[5px] border-l border-[#5a5f68]" />
        </div>
    </footer>
);

export default function App() {
    return (
        <div className="relative flex flex-col h-screen overflow-hidden font-['Open_Sans','Noto_Sans',sans-serif] text-[11px]">
            <Wallpaper />
            <div className="relative flex-1">
                <DesktopShortcuts />
                <Watermark />
                <ExplorerWindow />
                <ExtractDialog />
            </div>
            <Taskbar />
        </div>
    );
}
